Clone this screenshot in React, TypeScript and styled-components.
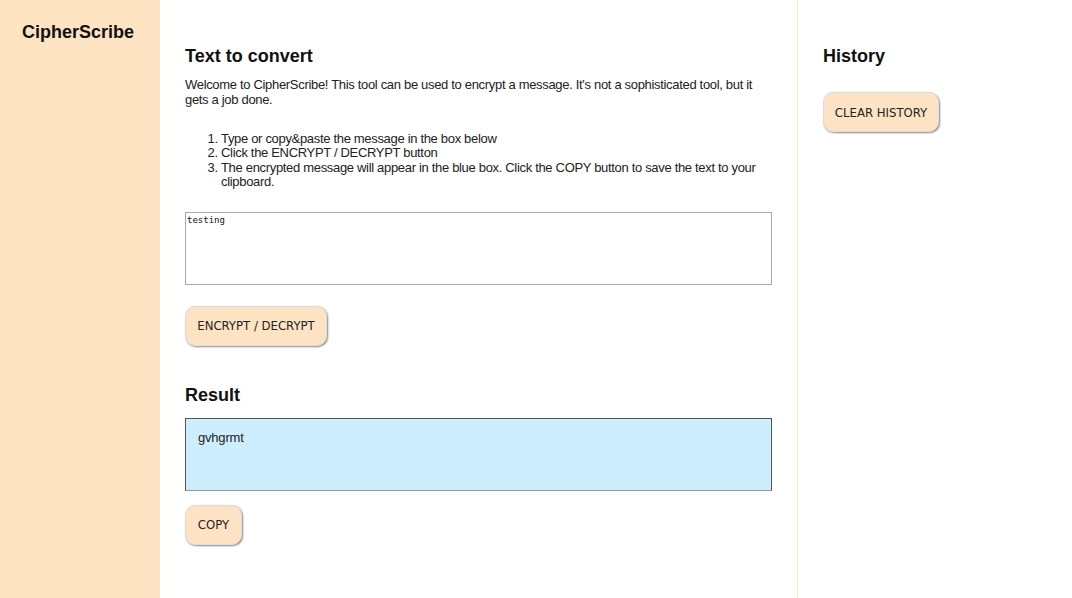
import React from "react";
import styled, { createGlobalStyle } from "styled-components";

const Global = createGlobalStyle`
  html, body { margin: 0; padding: 0; }
  body {
    font-family: "Liberation Sans", Arial, sans-serif;
    color: #222;
    background: #fff;
  }
`;

const Layout = styled.div`
  display: grid;
  grid-template-columns: 160px 637px 1fr;
  min-height: 100vh;
`;

const Sidebar = styled.aside`
  background: #ffe4c4;
  padding: 22px 22px;
`;

const Brand = styled.h1`
  margin: 0;
  font-size: 18px;
  font-weight: bold;
  color: #111;
  line-height: 21px;
`;

const Main = styled.main`
  padding: 46px 25px 40px;
  display: flex;
  flex-direction: column;
  align-items: flex-start;
`;

const History = styled.section`
  border-left: 1px solid #fde3c6;
  padding: 46px 25px;
  display: flex;
  flex-direction: column;
  align-items: flex-start;
`;

const Heading = styled.h2<{ $after: number }>`
  margin: 0 0 ${(p) => p.$after}px;
  font-size: 18px;
  line-height: 21px;
  font-weight: bold;
  color: #111;
`;

const Intro = styled.p`
  margin: 0 0 25px;
  font-size: 13px;
  line-height: 15px;
  letter-spacing: -0.32px;
  color: #222;
  width: 587px;
`;

const Steps = styled.ol`
  margin: 0 0 22px;
  padding-left: 36px;
  font-size: 13px;
  line-height: 14.4px;
  letter-spacing: -0.32px;
  color: #222;
  width: 551px;
`;

const Input = styled.textarea`
  box-sizing: border-box;
  width: 587px;
  height: 73px;
  margin: 0 0 21px;
  border: 1px solid #a9a9a9;
  padding: 2px 1px;
  font-family: "DejaVu Sans Mono", monospace;
  font-size: 9px;
  line-height: 11px;
  color: #111;
  resize: none;
  outline: none;
`;

const Button = styled.button<{ $w: number }>`
  box-sizing: border-box;
  width: ${(p) => p.$w}px;
  height: 40px;
  padding: 0;
  background: #fde2c3;
  border: 1px solid #ddd;
  border-radius: 10px;
  box-shadow: 1px 1px 2px #8a8a8a;
  font-family: "Liberation Sans Narrow", "DejaVu Sans Condensed", "Liberation Sans", sans-serif;
  font-stretch: condensed;
  font-size: 13px;
  color: #222;
  cursor: pointer;
`;

const Spacer = styled.div<{ $h: number }>`
  height: ${(p) => p.$h}px;
`;

const Output = styled.div`
  box-sizing: border-box;
  width: 587px;
  height: 73px;
  margin: 0 0 14px;
  background: #cdeefd;
  border: 1px solid #555;
  border-bottom-color: #999;
  padding: 11px 12px;
  font-size: 13px;
  line-height: 15px;
  letter-spacing: -0.2px;
  color: #222;
`;

export default function App() {
  return (
    <>
      <Global />
      <Layout>
        <Sidebar>
          <Brand>CipherScribe</Brand>
        </Sidebar>
        <Main>
          <Heading $after={10}>Text to convert</Heading>
          <Intro>
            Welcome to CipherScribe! This tool can be used to encrypt a message. It's not a sophisticated tool, but it gets a job done.
          </Intro>
          <Steps>
            <li>Type or copy&amp;paste the message in the box below</li>
            <li>Click the ENCRYPT / DECRYPT button</li>
            <li>
              The encrypted message will appear in the blue box. Click the COPY button to save the text to your clipboard.
            </li>
          </Steps>
          <Input defaultValue="testing" />
          <Button $w={142}>ENCRYPT / DECRYPT</Button>
          <Spacer $h={39} />
          <Heading $after={12}>Result</Heading>
          <Output>gvhgrmt</Output>
          <Button $w={57}>COPY</Button>
        </Main>
        <History>
          <Heading $after={25}>History</Heading>
          <Button $w={116}>CLEAR HISTORY</Button>
        </History>
      </Layout>
    </>
  );
}
